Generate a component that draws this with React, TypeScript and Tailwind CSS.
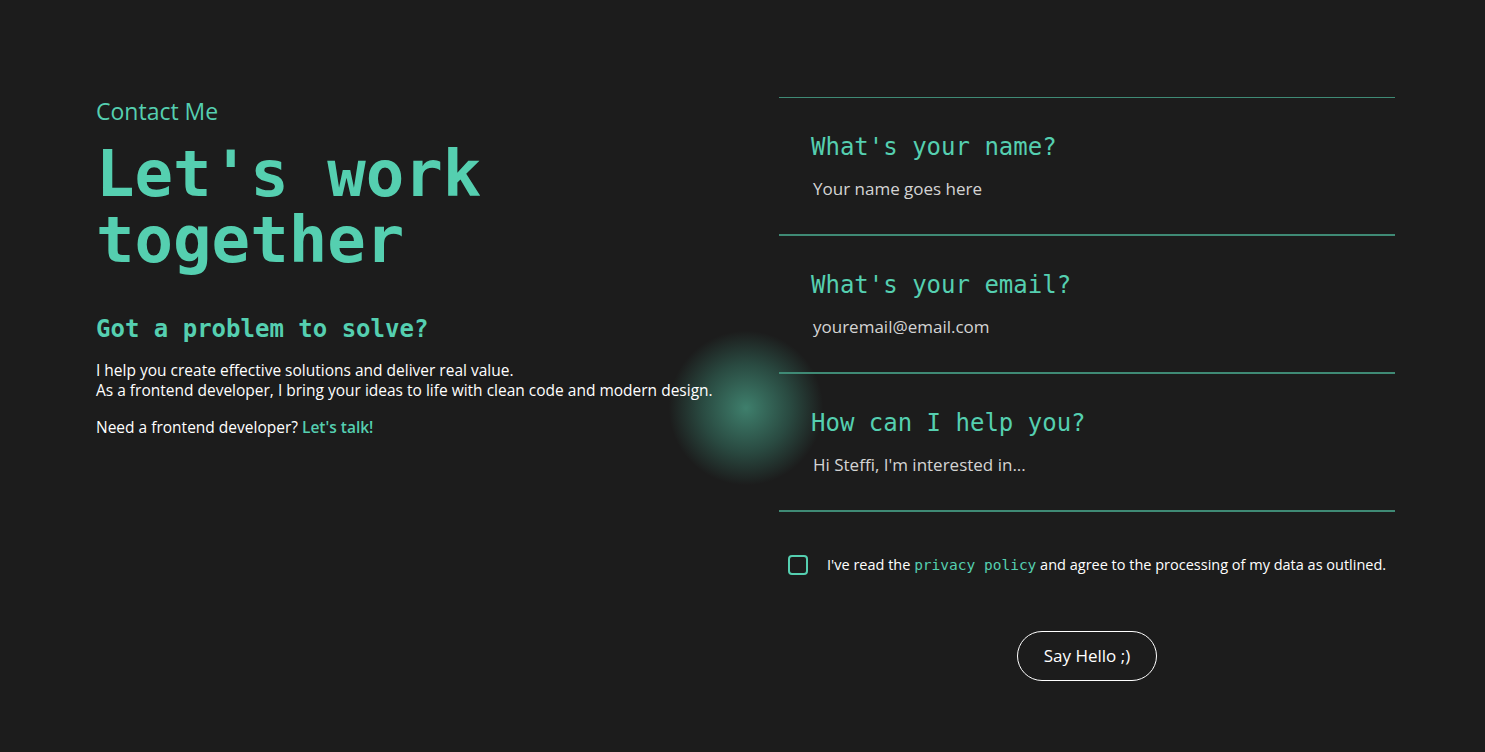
import React from 'react';

const mono = "font-['DejaVu_Sans_Mono',monospace]";
const sans = "font-['Open_Sans','Lato',sans-serif]";

const fields = [
  { id: 'name', label: "What's your name?", placeholder: 'Your name goes here' },
  { id: 'email', label: "What's your email?", placeholder: 'youremail@email.com' },
  { id: 'message', label: 'How can I help you?', placeholder: "Hi Steffi, I'm interested in..." },
];

export default function App() {
  return (
    <div className={`min-h-[752px] w-full bg-[#1c1c1c] ${sans} relative overflow-hidden`}>
      {/* glow */}
      <div className="absolute left-[668px] top-[330px] w-[156px] h-[156px] rounded-full bg-[radial-gradient(circle,rgba(74,160,135,0.75)_0%,rgba(58,130,110,0.45)_40%,rgba(28,28,28,0)_70%)] pointer-events-none" />

      <div className="relative flex pt-[97px] pl-[96px]">
        {/* Left */}
        <div className="w-[683px]">
          <p className="text-[23px] leading-[28px] text-[#55cfb0]">Contact Me</p>
          <h1 className={`${mono} mt-[16px] text-[64px] leading-[66px] font-bold text-[#55cfb0]`}>
            Let's work
            <br />
            together
          </h1>
          <h2 className={`${mono} mt-[41px] text-[24px] leading-[30px] font-bold text-[#55cfb0]`}>
            Got a problem to solve?
          </h2>
          <div className="mt-[16px] text-[15.5px] leading-[20px] text-white">
            <p>I help you create effective solutions and deliver real value.</p>
            <p>As a frontend developer, I bring your ideas to life with clean code and modern design.</p>
            <p className="mt-[17px]">
              Need a frontend developer? <span className="text-[#55cfb0] font-semibold">Let's talk!</span>
            </p>
          </div>
        </div>

        {/* Right: form */}
        <form className="w-[616px]">
          <div className="border-t border-[#3f8a75]">
            {fields.map((f) => (
              <div key={f.id} className="h-[138px] border-b-2 border-[#3f8a75] px-[32px] pt-[34px]">
                <label className={`${mono} block text-[24px] leading-[30px] text-[#55cfb0]`}>{f.label}</label>
                <div className="mt-[15px] pl-[2px] text-[17px] leading-[24px] text-[#d4d4d4]">{f.placeholder}</div>
              </div>
            ))}
          </div>

          <div className="mt-[42px] flex items-center pl-[9px]">
            <span className="w-[20px] h-[20px] rounded-[4px] border-2 border-[#55cfb0]" />
            <p className="ml-[19px] text-[14.5px] text-white">
              I've read the <span className={`${mono} text-[#55cfb0] text-[14.5px]`}>privacy policy</span> and agree
              to the processing of my data as outlined.
            </p>
          </div>

          <div className="mt-[54px] flex justify-center">
            <button
              type="button"
              className="w-[140px] h-[50px] rounded-full border border-white text-white text-[17px]"
            >
              Say Hello ;)
            </button>
          </div>
        </form>
      </div>
    </div>
  );
}
